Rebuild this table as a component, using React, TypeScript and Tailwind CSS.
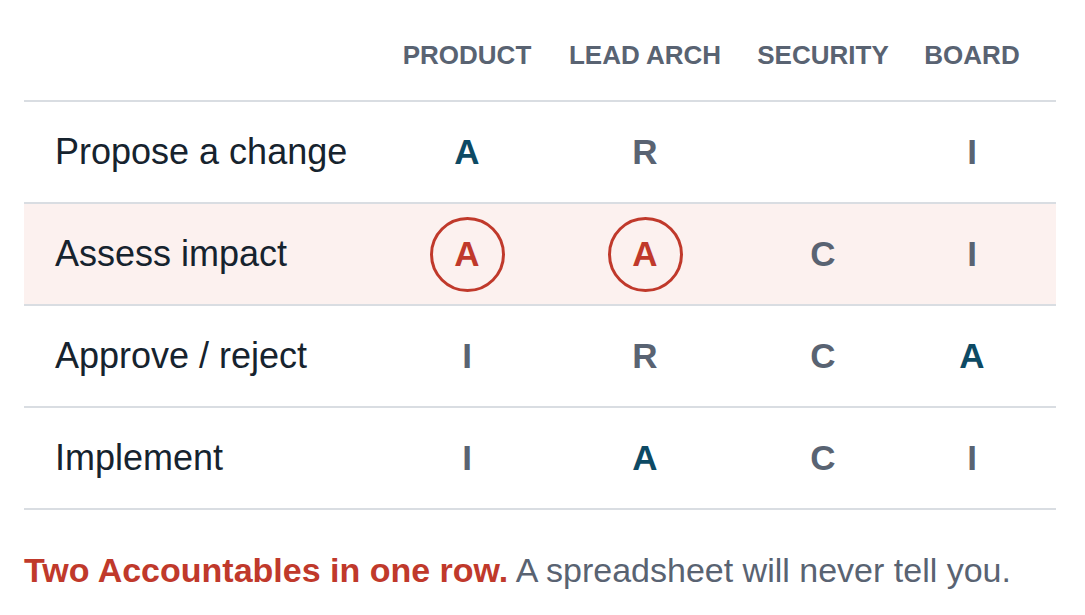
const roles = ["PRODUCT", "LEAD ARCH", "SECURITY", "BOARD"];

type Cell = "" | "A" | "R" | "C" | "I";

const rows: { task: string; cells: Cell[]; clash?: boolean }[] = [
  { task: "Propose a change", cells: ["A", "R", "", "I"] },
  { task: "Assess impact", cells: ["A", "A", "C", "I"], clash: true },
  { task: "Approve / reject", cells: ["I", "R", "C", "A"] },
  { task: "Implement", cells: ["I", "A", "C", "I"] },
];

function Letter({ value, clash }: { value: Cell; clash?: boolean }) {
  if (!value) return null;
  if (clash && value === "A") {
    return (
      <span className="flex h-[75px] w-[75px] items-center justify-center rounded-full border-[3px] border-[#c0392b] text-[#c0392b]">
        A
      </span>
    );
  }
  return <span className={value === "A" ? "text-[#0d4a64]" : "text-[#596372]"}>{value}</span>;
}

export default function App() {
  return (
    <div className="min-h-screen bg-white px-6 font-['Liberation_Sans',Arial,sans-serif]">
      <div className="w-[1032px]">
        <div className="grid h-[100px] grid-cols-[354px_178px_178px_178px_120px] items-center pt-[10px] text-[26px] font-bold text-[#596372]">
          <div />
          {roles.map((r) => (
            <div key={r} className="text-center">
              {r}
            </div>
          ))}
        </div>

        <div className="border-b-2 border-[#d9dde2]">
          {rows.map((row) => (
            <div
              key={row.task}
              className={
                "grid h-[102px] grid-cols-[354px_178px_178px_178px_120px] items-center border-t-2 border-[#d9dde2] " +
                (row.clash ? "bg-[#fcf1ef]" : "")
              }
            >
              <div className="pl-[31px] text-[36px] text-[#16232e]">{row.task}</div>
              {row.cells.map((c, i) => (
                <div key={i} className="flex justify-center text-[35px] font-bold">
                  <Letter value={c} clash={row.clash} />
                </div>
              ))}
            </div>
          ))}
        </div>
      </div>

      <p className="mt-[43px] text-[34px] leading-none text-[#596372]">
        <span className="font-bold text-[#c0392b]">Two Accountables in one row.</span> A spreadsheet will never tell you.
      </p>
    </div>
  );
}
